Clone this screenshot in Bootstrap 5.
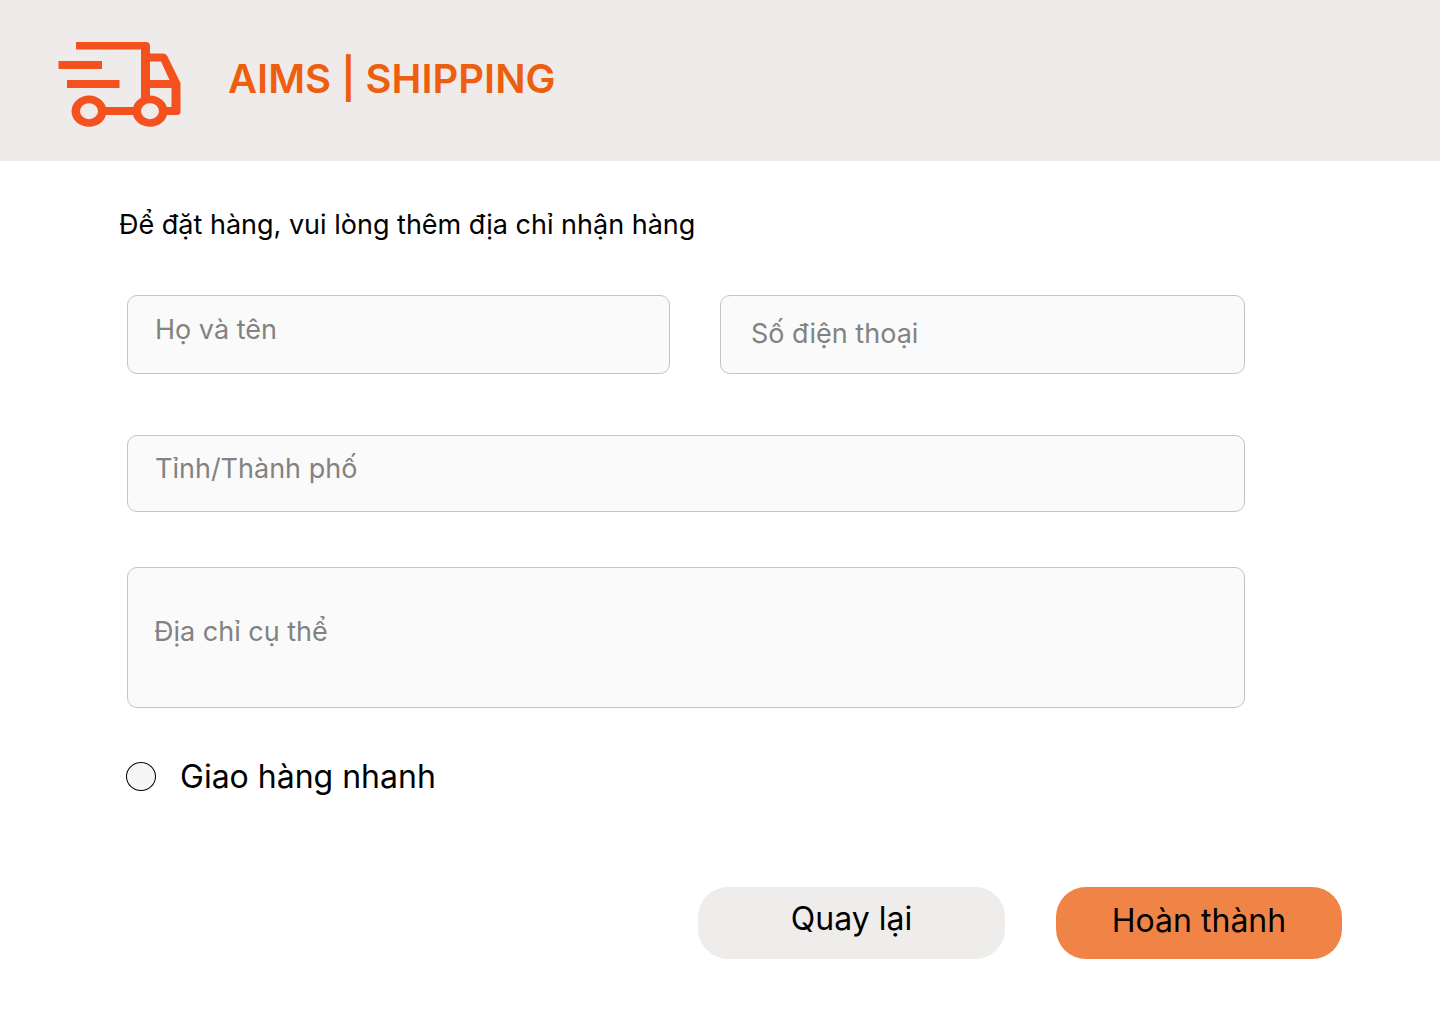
<!DOCTYPE html>
<html lang="vi">
<head>
<meta charset="utf-8">
<meta name="viewport" content="width=device-width, initial-scale=1">
<title>AIMS | SHIPPING</title>
<link href="https://cdn.jsdelivr.net/npm/bootstrap@5.3.0/dist/css/bootstrap.min.css" rel="stylesheet">
<style>
  body { font-family: Inter, "Noto Sans", sans-serif; color: #000; background: #fff; }
  .ship-header { background: #efebea; padding: 36px 52px 28px; }
  .ship-logo { width: 136px; height: 97px; }
  .ship-title { font-size: 40px; line-height: 48px; font-weight: 600; color: #ed5f0f; margin: 0 0 12px 40px; }
  .ship-main { padding: 44px 98px 40px 119px; }
  .ship-intro { font-size: 27px; line-height: 40px; margin: 0 0 50px; }
  .ship-fields { margin: 0 97px 0 8px; }
  .ship-pair { gap: 50px; margin-bottom: 61px; }
  .field-name { flex: 543 1 0; min-width: 0; }
  .field-phone { flex: 525 1 0; min-width: 0; }
  .ship-input, .ship-input:focus { font-size: 27px; line-height: 40px; border: 1px solid #c4c4c4; border-radius: 10px; background: #fafafa; color: #000; }
  .ship-input { height: 79px; padding: 0 27px 10px; }
  .ship-input::placeholder { color: #828282; opacity: 1; }
  .field-phone .ship-input { padding: 0 30px 2px; }
  .field-city { margin-bottom: 55px; }
  .field-city .ship-input { height: 77px; }
  textarea.ship-input { height: 141px; padding: 44px 26px 20px; resize: none; display: block; }
  .ship-check { gap: 24px; margin: 49px 0 0 7px; font-size: 32px; line-height: 40px; }
  .ship-check .form-check-input { width: 30px; height: 29px; margin: 0 0 2px; border: 1px solid #000; background-color: #f5f5f5; }
  .ship-check .form-check-input:checked { background-color: #f08446; }
  .ship-actions { gap: 51px; margin-top: 90px; }
  .ship-btn { height: 72px; border: 0; border-radius: 30px; font-size: 32px; line-height: 40px; color: #000; }
  .ship-back { width: 307px; padding: 0 0 8px; background: #eeedeb; }
  .ship-done { width: 286px; padding: 0 0 4px; background: #f08446; }
  @media (max-width: 900px) {
    .ship-main { padding: 32px 24px; }
    .ship-fields { margin: 0; }
    .ship-pair, .ship-actions { flex-wrap: wrap; gap: 24px; }
    .field-name, .field-phone { flex: 1 1 100%; }
  }
</style>
</head>
<body>
<header class="ship-header d-flex align-items-center">
  <svg class="ship-logo flex-shrink-0" viewBox="52 36 136 97" aria-hidden="true" fill="#f4511e">
    <path d="M76 42H146Q150 42 150 46V98H141V49.500H76Z"/>
    <path d="M58.500 61H102V69H58.500ZM67 80H119.500V88H67ZM104 107H136V115H104Z"/>
    <path fill-rule="evenodd" d="M149 53.500H163Q166 53.500 167.500 56.500L180.500 83V112Q180.500 115 177 115H164V107H171.500V88H149ZM149 61.500V80H169.500L161 61.500Z"/>
    <path fill-rule="evenodd" d="M71.500 111.200a17.500 15.600 0 1 0 35 0a17.500 15.600 0 1 0 -35 0ZM80 111.200a9 8 0 1 0 18 0a9 8 0 1 0 -18 0Z"/>
    <path fill-rule="evenodd" d="M132.500 111.200a17.500 15.600 0 1 0 35 0a17.500 15.600 0 1 0 -35 0ZM141 111.200a9 8 0 1 0 18 0a9 8 0 1 0 -18 0Z"/>
  </svg>
  <h1 class="ship-title">AIMS | SHIPPING</h1>
</header>
<main class="ship-main">
  <form>
    <p class="ship-intro">Để đặt hàng, vui lòng thêm địa chỉ nhận hàng</p>
    <div class="ship-fields">
      <div class="ship-pair d-flex">
        <div class="field-name">
          <input class="form-control ship-input" type="text" id="fullName" aria-label="Họ và tên" placeholder="Họ và tên">
        </div>
        <div class="field-phone">
          <input class="form-control ship-input" type="tel" id="phone" aria-label="Số điện thoại" placeholder="Số điện thoại">
        </div>
      </div>
      <div class="field-city">
        <input class="form-control ship-input" type="text" id="city" aria-label="Tỉnh/Thành phố" placeholder="Tỉnh/Thành phố">
      </div>
      <textarea class="form-control ship-input" id="address" aria-label="Địa chỉ cụ thể" placeholder="Địa chỉ cụ thể"></textarea>
    </div>
    <div class="ship-check d-flex align-items-center">
      <input class="form-check-input flex-shrink-0" type="radio" name="delivery" id="express">
      <label for="express">Giao hàng nhanh</label>
    </div>
    <div class="ship-actions d-flex justify-content-end">
      <button class="btn ship-btn ship-back" type="button">Quay lại</button>
      <button class="btn ship-btn ship-done" type="submit">Hoàn thành</button>
    </div>
  </form>
</main>
<script src="https://cdn.jsdelivr.net/npm/bootstrap@5.3.0/dist/js/bootstrap.bundle.min.js"></script>
</body>
</html>
